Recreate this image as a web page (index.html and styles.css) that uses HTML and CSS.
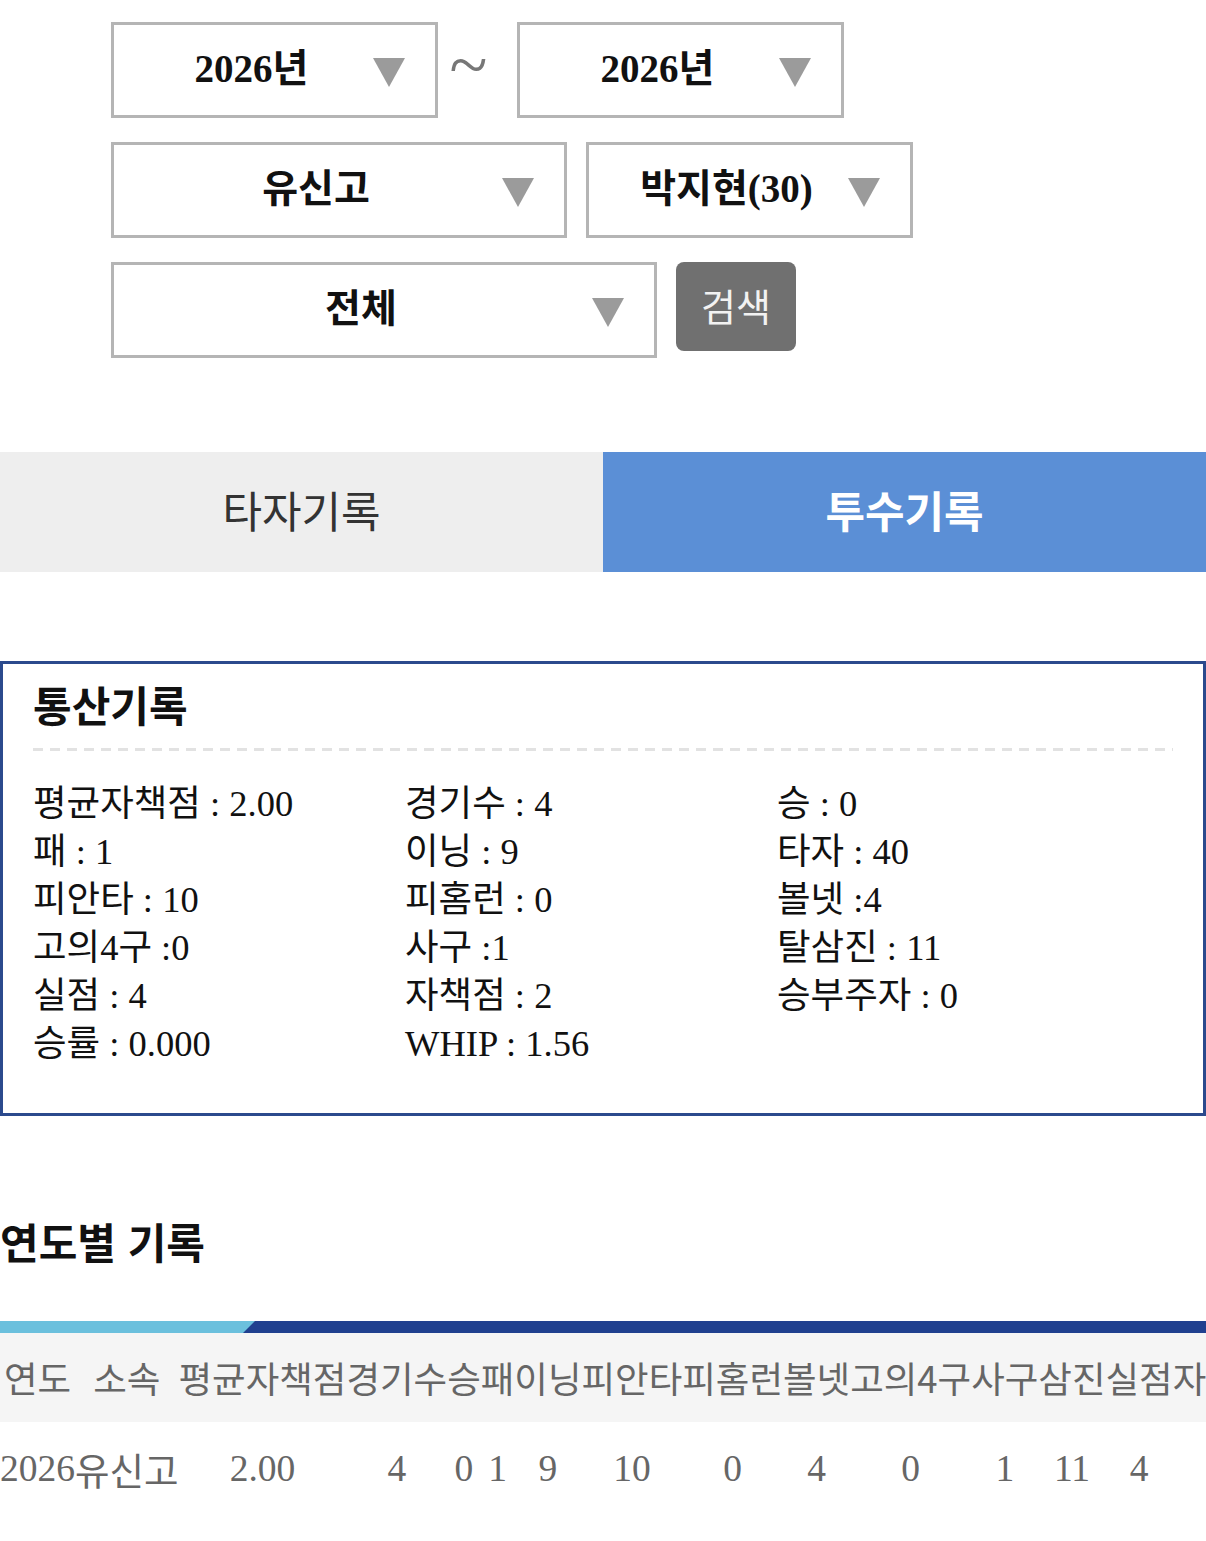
FILE: index.html
```html
<!DOCTYPE html>
<html lang="ko">
<head>
<meta charset="utf-8">
<title>투수기록</title>
<link rel="stylesheet" href="styles.css">
</head>
<body>
  <form class="search">
    <div class="search-row search-row-period">
      <div class="select select-year"><span>2026년</span><i class="arrow"></i></div>
      <span class="tilde">~</span>
      <div class="select select-year"><span>2026년</span><i class="arrow"></i></div>
    </div>
    <div class="search-row">
      <div class="select select-school"><span>유신고</span><i class="arrow"></i></div>
      <div class="select select-player"><span>박지현(30)</span><i class="arrow"></i></div>
    </div>
    <div class="search-row">
      <div class="select select-type"><span>전체</span><i class="arrow"></i></div>
      <button type="button" class="btn-search">검색</button>
    </div>
  </form>

  <nav class="tabs">
    <div class="tab tab-batter">타자기록</div>
    <div class="tab tab-pitcher">투수기록</div>
  </nav>

  <section class="career">
    <h2 class="career-title">통산기록</h2>
    <div class="career-divider"></div>
    <div class="career-stats">
      <span>평균자책점 : 2.00</span><span>경기수 : 4</span><span>승 : 0</span>
      <span>패 : 1</span><span>이닝 : 9</span><span>타자 : 40</span>
      <span>피안타 : 10</span><span>피홈런 : 0</span><span>볼넷 :4</span>
      <span>고의4구 :0</span><span>사구 :1</span><span>탈삼진 : 11</span>
      <span>실점 : 4</span><span>자책점 : 2</span><span>승부주자 : 0</span>
      <span>승률 : 0.000</span><span>WHIP : 1.56</span>
    </div>
  </section>

  <h2 class="yearly-title">연도별 기록</h2>
  <div class="bar"><div class="bar-accent"></div></div>
  <div class="table-wrap">
    <table class="yearly-table">
      <thead>
        <tr>
          <th>연도</th><th>소속</th><th>평균자책점</th><th>경기수</th><th>승</th><th>패</th>
          <th>이닝</th><th>피안타</th><th>피홈런</th><th>볼넷</th><th>고의4구</th><th>사구</th>
          <th>삼진</th><th>실점</th><th>자책점</th><th>WHIP</th>
        </tr>
      </thead>
      <tbody>
        <tr>
          <td>2026</td><td>유신고</td><td>2.00</td><td>4</td><td>0</td><td>1</td>
          <td>9</td><td>10</td><td>0</td><td>4</td><td>0</td><td>1</td>
          <td>11</td><td>4</td><td>2</td><td>1.56</td>
        </tr>
      </tbody>
    </table>
  </div>
</body>
</html>
```

FILE: styles.css
```css
body {
  margin: 0;
  background: #fff;
  color: #111;
  font-family: "Liberation Serif", "Noto Sans CJK KR", serif;
}

/* ---------- search form ---------- */
.search {
  display: flex;
  flex-direction: column;
  gap: 24px;
  padding: 22px 0 0 111px;
}

.search-row {
  display: flex;
  align-items: flex-start;
  gap: 19px;
}

.search-row-period {
  gap: 0;
}

.select {
  position: relative;
  box-sizing: border-box;
  height: 96px;
  padding: 0 46px 10px 0;
  border: 3px solid #b5b5b5;
  background: #fff;
  display: flex;
  align-items: center;
  justify-content: center;
  font-size: 39px;
  font-weight: 700;
  color: #111;
}

.select-year,
.select-player {
  width: 327px;
}

.select-school {
  width: 456px;
}

.select-type {
  width: 546px;
}

/* dropdown caret */
.arrow {
  position: absolute;
  right: 30px;
  top: 33px;
  width: 0;
  height: 0;
  border-left: 16.5px solid transparent;
  border-right: 16.5px solid transparent;
  border-top: 29px solid #9b9b9b;
  filter: blur(0.4px);
}

.tilde {
  box-sizing: border-box;
  width: 79px;
  padding-right: 18px;
  text-align: center;
  font-size: 70px;
  line-height: 85px;
  color: #777;
}

.btn-search {
  width: 120px;
  height: 89px;
  border: 0;
  border-radius: 8px;
  background: #707070;
  color: #f2f2f2;
  font-family: "Noto Sans CJK KR", sans-serif;
  font-size: 38px;
  padding: 0 0 4px;
}

/* ---------- tabs ---------- */
.tabs {
  display: flex;
  margin-top: 94px;
}

.tab {
  flex: 1;
  box-sizing: border-box;
  height: 120px;
  padding-bottom: 6px;
  display: flex;
  align-items: center;
  justify-content: center;
  font-family: "Noto Sans CJK KR", sans-serif;
  font-size: 43px;
}

.tab-batter {
  background: #eeeeee;
  color: #333;
}

.tab-pitcher {
  background: #5b8fd6;
  color: #fff;
  font-weight: 700;
}

/* ---------- career totals ---------- */
.career {
  margin-top: 89px;
  border: 3px solid #2b4a8d;
  padding: 16px 30px 45px;
}

.career-title {
  margin: 0;
  font-family: "Noto Sans CJK KR", sans-serif;
  font-size: 42px;
  font-weight: 700;
  line-height: 48px;
  color: #111;
}

.career-divider {
  height: 3px;
  margin-top: 20px;
  background: repeating-linear-gradient(to right, #e2e2e2 0 10px, transparent 10px 17px);
}

.career-stats {
  display: grid;
  grid-template-columns: repeat(3, 372px);
  margin-top: 29px;
  font-size: 36.5px;
  line-height: 48px;
  color: #111;
  white-space: nowrap;
}

/* ---------- yearly records ---------- */
.yearly-title {
  margin: 101px 0 0;
  font-family: "Noto Sans CJK KR", sans-serif;
  font-size: 42px;
  font-weight: 700;
  line-height: 48px;
  color: #111;
}

.bar {
  display: flex;
  height: 12px;
  margin-top: 56px;
  background: #20408f;
}

.bar-accent {
  width: 255px;
  height: 100%;
  background: #6bc0dd;
  clip-path: polygon(0 0, 100% 0, calc(100% - 12px) 100%, 0 100%);
}

.table-wrap {
  overflow: hidden;
  width: 100%;
}

.yearly-table {
  border-collapse: collapse;
  white-space: nowrap;
}

.yearly-table th {
  height: 89px;
  padding: 0;
  background: #f5f5f5;
  font-family: "Noto Sans CJK KR", sans-serif;
  font-size: 36.5px;
  font-weight: 400;
  color: #666;
}

.yearly-table td {
  height: 92px;
  padding: 0;
  text-align: center;
  font-size: 37.5px;
  color: #666;
}
```
